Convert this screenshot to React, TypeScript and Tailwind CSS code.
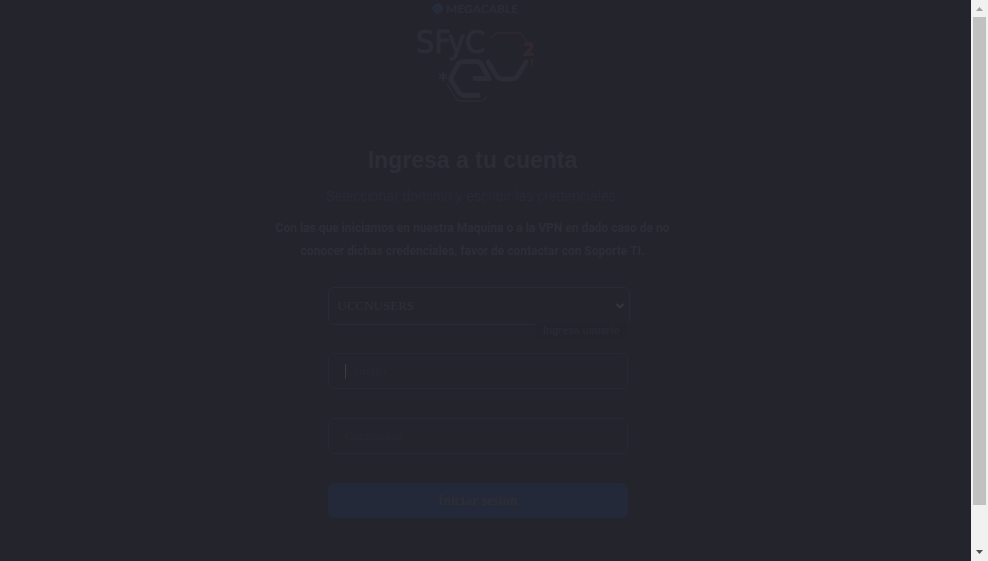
import { ChevronDown } from "lucide-react";

function Logo() {
  return (
    <svg
      viewBox="-3 0 150 110"
      className="h-[110px] w-[150px]"
      role="img"
      aria-label="Megacable SFyC"
      fill="none"
      strokeLinecap="round"
      strokeLinejoin="round"
    >
      <circle cx="36.500" cy="8.500" r="5.500" fill="#24293a" />
      <path d="M32 8l7-4M33 11l8-5M35 13l6-4" stroke="#2c2f3a" strokeWidth="1.200" />
      <text x="45" y="13" fontSize="12" fontWeight="700" fill="#2b2c38" className="font-['Lato',sans-serif]">
        MEGACABLE
      </text>
      <text
        x="15"
        y="53"
        fontSize="32"
        fill="#2c2c36"
        stroke="#2c2c36"
        strokeWidth="1"
        className="font-['Liberation_Sans_Narrow','DejaVu_Sans_Condensed',sans-serif]"
      >
        SFyC
      </text>
      <path d="M91 37q3-4 7-4h19q3 0 5 3l6 9M130 59q3 3 0 6" stroke="#2c282e" strokeWidth="2" />
      <text x="122" y="56" fontSize="19" fontWeight="800" fill="#32292e" className="font-['Open_Sans',sans-serif]">
        2
      </text>
      <path d="M74 78.500h14l-7-13q-2-4-6-4H63q-4 0-6 3l-6 11q-2 3 0 6l7 11q2 3 6 3h13" stroke="#2c2c36" strokeWidth="5" />
      <path d="M87 62l8 13q2 4 6 4h10q4 0 6-4l8-13" stroke="#2c2c36" strokeWidth="5" />
      <path d="M42 72.500v8M38.500 74.500l7 4M45.500 74.500l-7 4" stroke="#2c2c36" strokeWidth="2" />
      <path d="M46 84l8 13q2 4 6 4h20q3 0 5-4" stroke="#2b282f" strokeWidth="2" />
    </svg>
  );
}

const field =
  "h-9 w-[300px] rounded-md border border-[#292935] bg-transparent px-4 font-['Liberation_Serif',serif] text-[13px] text-[#2e2e37] outline-none placeholder:text-[#282834] placeholder:opacity-100";

function ScrollBar() {
  return (
    <div aria-hidden="true" className="flex w-[17px] shrink-0 flex-col items-center bg-[#f1f1f1]">
      <svg viewBox="0 0 17 17" className="h-[17px] w-[17px]">
        <path d="M5 11h7L8.500 7z" fill="#a3a3a3" />
      </svg>
      <div className="w-[13px] flex-1">
        <div className="h-[92.600%] bg-[#c1c1c1]" />
      </div>
      <svg viewBox="0 0 17 17" className="h-[17px] w-[17px]">
        <path d="M5 6h7L8.500 10z" fill="#505050" />
      </svg>
    </div>
  );
}

export default function App() {
  return (
    <div className="flex h-screen overflow-hidden bg-[#24242d] font-['Liberation_Sans',Arial,sans-serif]">
      <main className="flex flex-1 flex-col items-center pr-[26px] text-[#2d2d36]">
        <Logo />
        <h1 className="mt-8 text-[23px] font-bold leading-9">Ingresa a tu cuenta</h1>
        <p className="mt-2 text-sm leading-5 text-[#292937]">
          Seleccionar dominio y escribir las credenciales:
        </p>
        <p className="mt-[11px] w-[410px] text-center font-['Roboto',sans-serif] text-xs font-bold leading-[23px]">
          Con las que iniciamos en nuestra Maquina o a la VPN en dado caso de no conocer dichas
          credenciales, favor de contactar con Soporte TI.
        </p>
        <form className="mt-6 flex w-[290px] flex-col items-start" onSubmit={(e) => e.preventDefault()}>
          <div className="relative">
            <select
              aria-label="Dominio"
              className="h-[38px] w-[302px] appearance-none rounded-md border border-[#2a2a36] bg-transparent px-[9px] font-['Liberation_Serif',serif] text-[13px] text-[#303038] outline-none"
            >
              <option>UCCNUSERS</option>
            </select>
            <ChevronDown
              className="pointer-events-none absolute right-1 top-[13px] text-[#35353d]"
              size={12}
              strokeWidth={4}
            />
            <span
              role="tooltip"
              className="absolute right-0.5 top-9 rounded-sm bg-[#23232c] px-2 font-['Roboto',sans-serif] text-[11px] font-bold leading-4 text-[#292932]"
            >
              Ingresa usuario
            </span>
          </div>
          <div className="relative mt-7 flex items-center">
            <input aria-label="Usuario" placeholder="Usuario" className={field} />
            <span aria-hidden="true" className="pointer-events-none absolute left-[17px] h-[15px] w-px bg-[#3a3a42]" />
          </div>
          <input
            aria-label="Contraseña"
            type="password"
            placeholder="Contraseña"
            className={"mt-[29px] " + field}
          />
          <button
            type="submit"
            className="mt-[29px] h-[35px] w-[300px] rounded-md bg-[#232938] font-['Liberation_Serif',serif] text-sm font-bold text-[#2e2d37]"
          >
            Iniciar sesión
          </button>
        </form>
      </main>
      <ScrollBar />
    </div>
  );
}
